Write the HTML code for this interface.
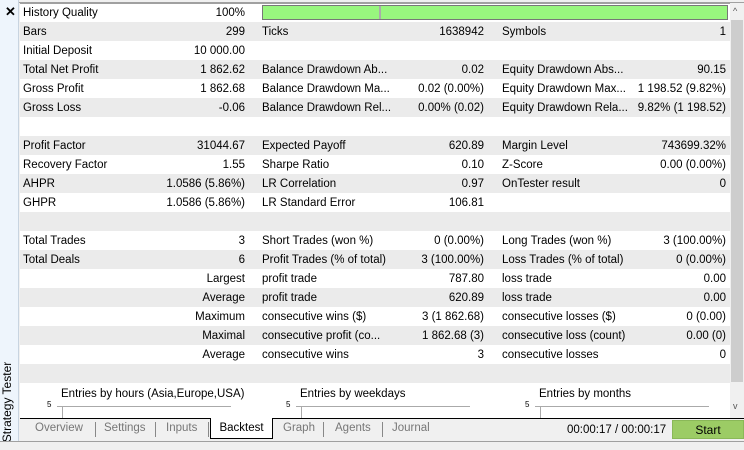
<!DOCTYPE html>
<html><head><style>
*{margin:0;padding:0;box-sizing:border-box}
body{width:744px;height:445px;overflow:hidden;background:#f0f0f0;font-family:"Liberation Sans",sans-serif;font-size:11.5px;color:#000;position:relative}
.side{position:absolute;left:0;top:0;width:19px;height:445px;background:#eef5fc;border-right:1px solid #c8d4e0}
.x{position:absolute;left:5px;top:4px;font-size:13px;font-weight:bold}
.vt{position:absolute;left:-40px;top:394px;width:96px;height:16px;transform:rotate(-90deg);font-size:12px;text-align:center;color:#000}
.main{position:absolute;left:20px;top:3px;width:710px;height:415px;background:#fff;border-top:1px solid #a0a0a0}
.top{position:absolute;left:0;top:0;width:744px;height:3px;background:#f0f0f0;border-bottom:1px solid #a0a0a0}
.r{position:absolute;left:20px;width:710px;height:19px;line-height:20px}
.g{background:#ebebeb}
.r span{position:absolute;top:0;white-space:nowrap}
.l1{left:3px}.v1{right:485px;text-align:right}
.l2{left:242px}.v2{right:246px}
.l3{left:482px}.v3{right:4px}
.pb{position:absolute;left:262px;top:5px;width:466px;height:15px;background:#98f67e;border:1px solid #777}
.sb{position:absolute;left:730px;top:3px;width:14px;height:415px;background:#f0f0f0}
.thumb{position:absolute;left:731px;top:20px;width:12px;height:362px;background:#cdcdcd}
.ct{position:absolute;font-size:11.5px;white-space:nowrap}
.tabs{position:absolute;left:20px;top:418px;width:724px;height:22px;border-top:1px solid #000;background:#f0f0f0}
.tab{position:absolute;top:3px;color:#777;font-size:11.5px}
.sep{position:absolute;top:3px;width:1px;height:15px;background:#888}
.sel{position:absolute;left:190px;top:-1px;width:63px;height:21px;background:#fff;border:1px solid #000;border-top:none;text-align:center;line-height:20px;color:#000}
.start{position:absolute;left:672px;top:420px;width:72px;height:19px;background:#9ccc65;border:1px solid #8ab858;text-align:center;line-height:18px;font-size:12px}
.bot{position:absolute;left:0;top:441px;width:744px;height:4px;background:#f0f0f0;border-top:1px solid #a0a0a0}
</style></head><body>
<div class="top"></div>
<div class="main"></div>
<div class="side"><div class="x">✕</div><div class="vt">Strategy Tester</div></div>

<div class="r" style="top:3px"><span class="l1">History Quality</span><span class="v1">100%</span></div>
<div class="pb"><div style="position:absolute;left:116px;top:0;width:2px;height:13px;background:#aaa"></div></div>
<div class="r g" style="top:22px"><span class="l1">Bars</span><span class="v1">299</span><span class="l2">Ticks</span><span class="v2">1638942</span><span class="l3">Symbols</span><span class="v3">1</span></div>
<div class="r" style="top:41px"><span class="l1">Initial Deposit</span><span class="v1">10 000.00</span></div>
<div class="r g" style="top:60px"><span class="l1">Total Net Profit</span><span class="v1">1 862.62</span><span class="l2">Balance Drawdown Ab...</span><span class="v2">0.02</span><span class="l3">Equity Drawdown Abs...</span><span class="v3">90.15</span></div>
<div class="r" style="top:79px"><span class="l1">Gross Profit</span><span class="v1">1 862.68</span><span class="l2">Balance Drawdown Ma...</span><span class="v2">0.02 (0.00%)</span><span class="l3">Equity Drawdown Max...</span><span class="v3">1 198.52 (9.82%)</span></div>
<div class="r g" style="top:98px"><span class="l1">Gross Loss</span><span class="v1">-0.06</span><span class="l2">Balance Drawdown Rel...</span><span class="v2">0.00% (0.02)</span><span class="l3">Equity Drawdown Rela...</span><span class="v3">9.82% (1 198.52)</span></div>
<div class="r" style="top:117px"></div>
<div class="r g" style="top:136px"><span class="l1">Profit Factor</span><span class="v1">31044.67</span><span class="l2">Expected Payoff</span><span class="v2">620.89</span><span class="l3">Margin Level</span><span class="v3">743699.32%</span></div>
<div class="r" style="top:155px"><span class="l1">Recovery Factor</span><span class="v1">1.55</span><span class="l2">Sharpe Ratio</span><span class="v2">0.10</span><span class="l3">Z-Score</span><span class="v3">0.00 (0.00%)</span></div>
<div class="r g" style="top:174px"><span class="l1">AHPR</span><span class="v1">1.0586 (5.86%)</span><span class="l2">LR Correlation</span><span class="v2">0.97</span><span class="l3">OnTester result</span><span class="v3">0</span></div>
<div class="r" style="top:193px"><span class="l1">GHPR</span><span class="v1">1.0586 (5.86%)</span><span class="l2">LR Standard Error</span><span class="v2">106.81</span></div>
<div class="r g" style="top:212px"></div>
<div class="r" style="top:231px"><span class="l1">Total Trades</span><span class="v1">3</span><span class="l2">Short Trades (won %)</span><span class="v2">0 (0.00%)</span><span class="l3">Long Trades (won %)</span><span class="v3">3 (100.00%)</span></div>
<div class="r g" style="top:250px"><span class="l1">Total Deals</span><span class="v1">6</span><span class="l2">Profit Trades (% of total)</span><span class="v2">3 (100.00%)</span><span class="l3">Loss Trades (% of total)</span><span class="v3">0 (0.00%)</span></div>
<div class="r" style="top:269px"><span class="v1">Largest</span><span class="l2">profit trade</span><span class="v2">787.80</span><span class="l3">loss trade</span><span class="v3">0.00</span></div>
<div class="r g" style="top:288px"><span class="v1">Average</span><span class="l2">profit trade</span><span class="v2">620.89</span><span class="l3">loss trade</span><span class="v3">0.00</span></div>
<div class="r" style="top:307px"><span class="v1">Maximum</span><span class="l2">consecutive wins ($)</span><span class="v2">3 (1 862.68)</span><span class="l3">consecutive losses ($)</span><span class="v3">0 (0.00)</span></div>
<div class="r g" style="top:326px"><span class="v1">Maximal</span><span class="l2">consecutive profit (co...</span><span class="v2">1 862.68 (3)</span><span class="l3">consecutive loss (count)</span><span class="v3">0.00 (0)</span></div>
<div class="r" style="top:345px"><span class="v1">Average</span><span class="l2">consecutive wins</span><span class="v2">3</span><span class="l3">consecutive losses</span><span class="v3">0</span></div>
<div class="r g" style="top:364px"></div>

<div class="sb"><div style="position:absolute;left:3px;top:3px;font-size:9px;color:#555">^</div><div style="position:absolute;left:3px;top:398px;font-size:9px;color:#555">v</div></div>
<div class="thumb"></div>

<div class="ct" style="left:61px;top:388px">Entries by hours (Asia,Europe,USA)</div>
<div class="ct" style="left:47px;top:400px;font-size:8px">5</div>
<div style="position:absolute;left:57px;top:406px;width:174px;height:1px;background:#aaa"></div>
<div style="position:absolute;left:62px;top:406px;width:1px;height:12px;background:#aaa"></div>
<div class="ct" style="left:300px;top:388px">Entries by weekdays</div>
<div class="ct" style="left:286px;top:400px;font-size:8px">5</div>
<div style="position:absolute;left:296px;top:406px;width:174px;height:1px;background:#aaa"></div>
<div style="position:absolute;left:301px;top:406px;width:1px;height:12px;background:#aaa"></div>
<div class="ct" style="left:539px;top:388px">Entries by months</div>
<div class="ct" style="left:525px;top:400px;font-size:8px">5</div>
<div style="position:absolute;left:535px;top:406px;width:174px;height:1px;background:#aaa"></div>
<div style="position:absolute;left:540px;top:406px;width:1px;height:12px;background:#aaa"></div>

<div class="tabs">
<span class="tab" style="left:15px">Overview</span><div class="sep" style="left:75px"></div>
<span class="tab" style="left:84px">Settings</span><div class="sep" style="left:135px"></div>
<span class="tab" style="left:146px">Inputs</span><div class="sep" style="left:188px"></div>
<div class="sel">Backtest</div>
<span class="tab" style="left:263px">Graph</span><div class="sep" style="left:303px"></div>
<span class="tab" style="left:315px">Agents</span><div class="sep" style="left:362px"></div>
<span class="tab" style="left:372px">Journal</span>
<span style="position:absolute;left:547px;top:5px;font-size:11.5px">00:00:17 / 00:00:17</span>
</div>
<div class="start">Start</div>
<div class="bot"></div>
</body></html>
